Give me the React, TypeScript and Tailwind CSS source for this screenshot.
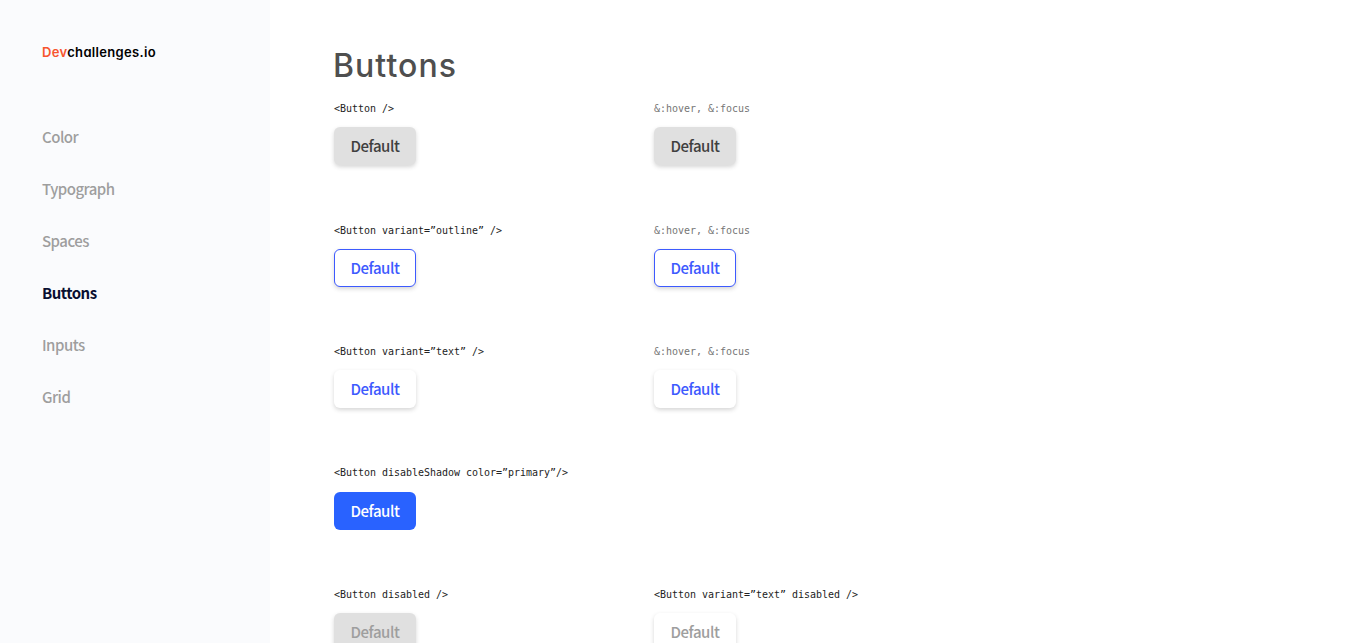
type Variant = "default" | "outline" | "text" | "primary" | "disabled" | "textDisabled";

const styles: Record<Variant, string> = {
  default: "bg-[#e0e0e0] text-[#3f3f3f] shadow-[0_2px_4px_rgba(51,51,51,0.2)]",
  outline: "border border-[#3d5afe] bg-white text-[#3d5afe] shadow-[0_2px_4px_rgba(51,51,51,0.2)]",
  text: "bg-white text-[#3d5afe] shadow-[0_2px_4px_rgba(51,51,51,0.2)]",
  primary: "bg-[#2962ff] text-white",
  disabled: "bg-[#e0e0e0] text-[#9e9e9e] shadow-[0_2px_4px_rgba(51,51,51,0.2)]",
  textDisabled: "bg-white text-[#9e9e9e] shadow-[0_2px_4px_rgba(51,51,51,0.2)]",
};

function Button({ variant }: { variant: Variant }) {
  return (
    <button
      className={`flex h-[38px] w-[82px] items-center justify-center rounded-md font-['Noto_Sans_CJK_JP',sans-serif] text-[15px] leading-6 font-medium tracking-[-0.47px] ${styles[variant]}`}
    >
      Default
    </button>
  );
}

function Example({ label, variant, muted = false }: { label: string; variant: Variant; muted?: boolean }) {
  return (
    <div className="w-80">
      <p
        className={`mb-2.5 h-[16.2px] font-['DejaVu_Sans_Mono','Liberation_Mono',monospace] text-[9.97px] leading-4 whitespace-pre ${muted ? "text-[#757575]" : "text-[#222222]"}`}
      >
        {label}
      </p>
      <Button variant={variant} />
    </div>
  );
}

const nav = ["Color", "Typograph", "Spaces", "Buttons", "Inputs", "Grid"];

const rows: { label: string; variant: Variant; muted?: boolean }[][] = [
  [
    { label: "<Button />", variant: "default" },
    { label: "&:hover, &:focus", variant: "default", muted: true },
  ],
  [
    { label: "<Button variant=”outline” />", variant: "outline" },
    { label: "&:hover, &:focus", variant: "outline", muted: true },
  ],
  [
    { label: "<Button variant=”text” />", variant: "text" },
    { label: "&:hover, &:focus", variant: "text", muted: true },
  ],
  [{ label: "<Button disableShadow color=”primary”/>", variant: "primary" }],
  [
    { label: "<Button disabled />", variant: "disabled" },
    { label: "<Button variant=”text” disabled />", variant: "textDisabled" },
  ],
];

export default function App() {
  return (
    <div className="flex h-[643px] w-full overflow-hidden bg-white">
      <aside className="w-[270px] shrink-0 bg-[#fafbfd] pl-[42px]">
        <div className="mt-[42px] h-5 font-['Inter',sans-serif] text-[13px] leading-5 font-semibold tracking-[0.33px] whitespace-nowrap text-[#090f31] [font-feature-settings:'cv11']">
          <span className="text-[#f7542e]">Dev</span>
          <span className="text-black">challenges.io</span>
        </div>
        <nav className="mt-[63px] flex flex-col gap-7 font-['Noto_Sans_CJK_JP',sans-serif] text-[15px] leading-6 tracking-[-0.52px]">
          {nav.map((item) => (
            <a key={item} className={item === "Buttons" ? "font-bold text-[#090f31]" : "font-medium text-[#9e9e9e]"}>
              {item}
            </a>
          ))}
        </nav>
      </aside>
      <main className="flex-1 pl-16">
        <h1 className="mt-[41px] mb-[10.2px] -ml-px h-[50px] font-['Inter',sans-serif] text-[32px] leading-[50px] font-medium tracking-[1.05px] text-[#4f4f4f]">
          Buttons
        </h1>
        {rows.map((row, i) => (
          <div key={i} className="flex h-[121.4px]">
            {row.map((cell) => (
              <Example key={cell.label} {...cell} />
            ))}
          </div>
        ))}
      </main>
    </div>
  );
}
